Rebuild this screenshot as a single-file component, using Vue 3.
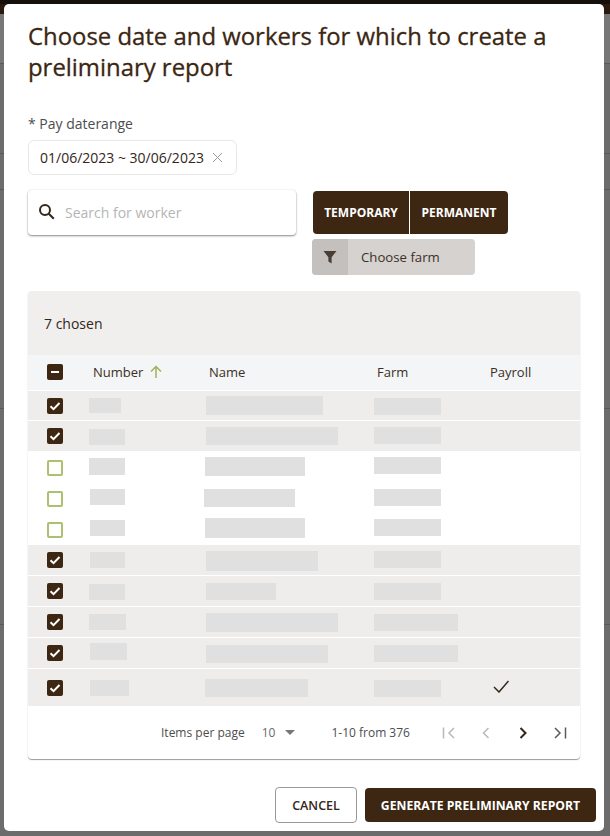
<script setup>
const rows = [
  { on: true, h: 30, line: true, n: [0, 32, 7, 15], m: [2, 117, 5, 19], f: [0, 67, 7, 17] },
  { on: true, h: 30, line: false, n: [0, 36, 8, 16], m: [2, 132, 6, 18], f: [0, 67, 6, 17] },
  { on: false, h: 31, line: false, n: [0, 36, 7, 17], m: [1, 100, 6, 19], f: [0, 67, 6, 17] },
  { on: false, h: 31, line: false, n: [1, 35, 7, 16], m: [0, 91, 7, 18], f: [0, 67, 7, 17] },
  { on: false, h: 32, line: false, n: [1, 35, 7, 16], m: [1, 100, 5, 20], f: [0, 67, 6, 17] },
  { on: true, h: 31, line: true, n: [1, 35, 7, 16], m: [2, 112, 6, 20], f: [0, 67, 6, 17] },
  { on: true, h: 31, line: true, n: [0, 36, 8, 16], m: [2, 70, 7, 17], f: [0, 67, 7, 17] },
  { on: true, h: 31, line: true, n: [0, 37, 7, 16], m: [2, 132, 6, 19], f: [0, 84, 7, 17] },
  { on: true, h: 31, line: true, n: [1, 37, 5, 17], m: [2, 122, 7, 18], f: [0, 84, 7, 17] },
  { on: true, h: 37, line: false, n: [1, 39, 11, 16], m: [1, 103, 10, 18], f: [0, 67, 11, 17], done: true },
]
const block = (b) => ({
  marginLeft: b[0] + 'px',
  width: b[1] + 'px',
  marginTop: b[2] + 'px',
  height: b[3] + 'px',
})
</script>

<template>
  <div class="page">
    <section class="modal">
      <h1 class="title">Choose date and workers for which to create a preliminary report</h1>
      <label class="field-label">* Pay daterange</label>
      <div class="range">
        <span>01/06/2023 ~ 30/06/2023</span>
        <svg width="11" height="11" viewBox="0 0 11 11" class="clear"><path d="M1 1l9 9M10 1l-9 9" /></svg>
      </div>
      <div class="filters">
        <div class="search">
          <svg width="18" height="18" viewBox="0 0 18 18" class="lens"><circle cx="7" cy="7" r="5" /><path d="M10.800 10.800l5 5" /></svg>
          <span>Search for worker</span>
        </div>
        <div class="filter-side">
          <div class="toggle">
            <button class="tg first">TEMPORARY</button>
            <button class="tg second">PERMANENT</button>
          </div>
          <div class="farm">
            <span class="farm-icon">
              <svg width="14" height="14" viewBox="0 0 14 14"><path d="M0.500 1h13L8.600 7.200V13.500L5.400 11.500V7.200z" /></svg>
            </span>
            <span class="farm-text">Choose farm</span>
          </div>
        </div>
      </div>

      <div class="card">
        <div class="toolbar">7 chosen</div>
        <div class="grid head">
          <div class="check-cell">
            <span class="box dark">
              <svg width="16" height="16" viewBox="0 0 16 16"><path d="M4 8h8" class="mark" /></svg>
            </span>
          </div>
          <div class="h-num">Number
            <svg width="14" height="14" viewBox="0 0 14 14" class="arrow"><path d="M7 13V2M2 6.500L7 1.500l5 5" /></svg>
          </div>
          <div class="h-name">Name</div>
          <div class="h-farm">Farm</div>
          <div>Payroll</div>
        </div>
        <div
          v-for="(r, i) in rows"
          :key="i"
          class="grid row"
          :class="{ chosen: r.on, line: r.line }"
          :style="{ height: r.h + 'px' }"
        >
          <div class="check-cell" :class="{ low: !r.on }">
            <span class="box" :class="r.on ? 'dark' : 'empty'">
              <svg v-if="r.on" width="16" height="16" viewBox="0 0 16 16"><path d="M3.500 8.300l3 2.900 6-6.200" class="mark" /></svg>
            </span>
          </div>
          <div><div class="skel" :style="block(r.n)"></div></div>
          <div><div class="skel" :style="block(r.m)"></div></div>
          <div><div class="skel" :style="block(r.f)"></div></div>
          <div class="done-cell">
            <svg v-if="r.done" width="16" height="13" viewBox="0 0 16 13" class="tick"><path d="M1 7l5 5L15.500 1" /></svg>
          </div>
        </div>
        <div class="pager">
          <span class="ipp">Items per page</span>
          <span class="size">10</span>
          <svg width="10" height="5" viewBox="0 0 10 5" class="caret"><path d="M0 0h10L5 5z" /></svg>
          <span class="count">1-10 from 376</span>
          <div class="nav">
            <svg width="14" height="14" viewBox="0 0 14 14" class="pg off"><path d="M1.500 1.500v11M12 2L7 7l5 5" /></svg>
            <svg width="14" height="14" viewBox="0 0 14 14" class="pg off"><path d="M9.500 2L4.500 7l5 5" /></svg>
            <svg width="14" height="14" viewBox="0 0 14 14" class="pg on"><path d="M4.500 2l5 5-5 5" /></svg>
            <svg width="14" height="14" viewBox="0 0 14 14" class="pg last"><path d="M2 2l5 5-5 5M12.500 1.500v11" /></svg>
          </div>
        </div>
      </div>

      <div class="actions">
        <button class="cancel">CANCEL</button>
        <button class="generate">GENERATE PRELIMINARY REPORT</button>
      </div>
    </section>
  </div>
</template>

<style>
html, body { margin: 0; background: #6c6c6c; }
</style>

<style scoped>
.page {
  width: 610px;
  height: 836px;
  overflow: hidden;
  box-sizing: border-box;
  padding: 4px 6px 5px 4px;
  background:
    linear-gradient(#17100a, #17100a) 0 0 / 100% 4px no-repeat,
    linear-gradient(#2a1b0e, #2a1b0e) 0 4px / 100% 10px no-repeat,
    linear-gradient(#777, #777) 0 14px / 100% 49px no-repeat,
    linear-gradient(#5a5a5a, #5a5a5a) 0 63px / 100% 1px no-repeat,
    linear-gradient(#5a5a5a, #5a5a5a) 0 153px / 100% 1px no-repeat,
    linear-gradient(#5a5a5a, #5a5a5a) 0 189px / 100% 1px no-repeat,
    linear-gradient(#5a5a5a, #5a5a5a) 0 408px / 100% 1px no-repeat,
    linear-gradient(#5a5a5a, #5a5a5a) 0 624px / 100% 1px no-repeat,
    #6c6c6c;
  font-family: "Open Sans", sans-serif;
  color: #3b2612;
}
.modal {
  height: 827px;
  box-sizing: border-box;
  background: #fff;
  border-radius: 5px;
  padding: 16px 24px 0 24px;
  display: flex;
  flex-direction: column;
  align-items: flex-start;
}
.title {
  margin: 0;
  font-size: 23.900px;
  font-weight: 500;
  line-height: 31px;
  width: 540px;
  -webkit-text-stroke: 0.3px #3b2612;
}
.field-label {
  margin-top: 32px;
  font-size: 14px;
  line-height: 20px;
  color: #4d4d4d;
}
.range {
  margin-top: 6px;
  height: 35px;
  width: 209px;
  box-sizing: border-box;
  border: 1px solid #e8e8e8;
  border-radius: 6px;
  padding: 0 13px 1px 11px;
  display: flex;
  align-items: center;
  justify-content: space-between;
  font-size: 14px;
  color: #33261a;
}
.clear { stroke: #9a9a9a; stroke-width: 1; fill: none; }
.filters {
  margin-top: 15px;
  display: flex;
  align-items: flex-start;
  gap: 16px;
}
.search {
  width: 268px;
  height: 45px;
  box-sizing: border-box;
  border-radius: 4px;
  background: #fff;
  box-shadow: 0 1px 2px rgba(0, 0, 0, 0.45), 0 0 2px rgba(0, 0, 0, 0.08);
  display: flex;
  align-items: center;
  padding: 0 0 1px 10px;
  gap: 9px;
  font-size: 14px;
  color: #b5b5b5;
}
.lens { stroke: #33261a; stroke-width: 2; fill: none; }
.filter-side {
  display: flex;
  flex-direction: column;
  gap: 5px;
  margin-top: 1px;
}
.toggle {
  display: flex;
  margin-left: 1px;
}
.tg {
  height: 43px;
  border: 0;
  background: #3d2713;
  color: #fff;
  font-family: inherit;
  font-size: 12px;
  font-weight: 700;
  padding: 0 11px;
  border-radius: 0 4px 4px 0;
}
.tg.first {
  width: 97px;
  border-right: 1px solid #fff;
  border-radius: 4px 0 0 4px;
}
.tg.second { width: 98px; }
.farm {
  width: 163px;
  height: 36px;
  border-radius: 4px;
  background: #d5d2d0;
  display: flex;
  align-items: center;
  overflow: hidden;
  font-size: 13.200px;
  color: #3d3026;
}
.farm-icon {
  width: 36px;
  height: 36px;
  background: #c4c0bd;
  display: flex;
  align-items: center;
  justify-content: center;
}
.farm-icon path { fill: #4a3d33; }
.farm-text { margin-left: 13px; }
.card {
  margin-top: 16px;
  width: 552px;
  height: 468px;
  border-radius: 4px;
  background: #fff;
  box-shadow: 0 1px 1px rgba(0, 0, 0, 0.4);
  overflow: hidden;
}
.toolbar {
  height: 64px;
  box-sizing: border-box;
  background: #f0efed;
  padding-left: 16px;
  display: flex;
  align-items: center;
  font-size: 14px;
  color: #33261a;
}
.grid {
  display: grid;
  grid-template-columns: 61px 115px 170px 116px 90px;
}
.head {
  height: 36px;
  background: #f3f5f7;
  border-bottom: 1px solid #fff;
  box-sizing: border-box;
  align-items: center;
  font-size: 13px;
  color: #3b2f24;
  padding-bottom: 1px;
}
.h-num { padding-left: 4px; display: flex; align-items: center; gap: 6px; }
.h-name { padding-left: 5px; }
.h-farm { padding-left: 3px; }
.arrow { stroke: #9db35a; stroke-width: 1.500; fill: none; }
.row { box-sizing: border-box; }
.row.chosen { background: #eeedec; }
.row.line { border-bottom: 1px solid #fff; }
.check-cell {
  display: flex;
  align-items: center;
  padding-left: 19px;
}
.check-cell.low { padding-top: 2px; }
.box {
  width: 16px;
  height: 16px;
  box-sizing: border-box;
  border-radius: 2px;
  display: block;
}
.box svg { display: block; }
.box.dark { background: #3d2713; }
.box.empty { border: 2px solid #adc070; background: #fff; }
.mark { stroke: #fff; stroke-width: 2; fill: none; }
.skel { background: #e0e0e0; }
.done-cell { display: flex; align-items: center; padding: 0 0 3px 3px; }
.tick { stroke: #33261a; stroke-width: 1.500; fill: none; }
.pager {
  height: 53px;
  box-sizing: border-box;
  padding: 0 0 0 133px;
  display: flex;
  align-items: center;
  font-size: 12px;
  color: #4d4d4d;
}
.size { margin-left: 17px; color: #6a6a6a; }
.caret { margin-left: 10px; fill: #777; }
.count { margin-left: 36px; }
.nav {
  margin-left: 32px;
  display: flex;
  gap: 23px;
}
.pg { fill: none; stroke-width: 1.500; }
.pg.off { stroke: #b9b9b9; }
.pg.on { stroke: #33261a; stroke-width: 2; }
.pg.last { stroke: #5a5a5a; }
.actions {
  margin-top: 28px;
  align-self: flex-end;
  margin-right: -16px;
  display: flex;
  gap: 8px;
}
.cancel {
  width: 82px;
  height: 36px;
  background: #fff;
  border: 1px solid #999;
  border-radius: 4px;
  font-family: inherit;
  font-size: 12.500px;
  font-weight: 600;
  color: #33261a;
}
.generate {
  width: 231px;
  height: 34px;
  margin-top: 1px;
  background: #3d2713;
  border: 0;
  border-radius: 4px;
  color: #fff;
  font-family: inherit;
  font-size: 12.200px;
  font-weight: 700;
}
</style>
